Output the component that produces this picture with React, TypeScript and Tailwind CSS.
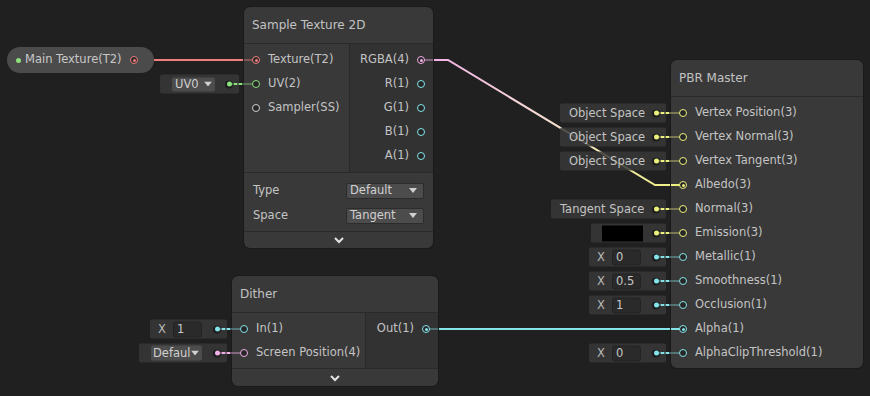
import React from "react";

type Tone = { ring: string; fill: string; dim: string };

const tone: Record<string, Tone> = {
  tex: { ring: "border-[#f07e7e]", fill: "bg-[#f07e7e]", dim: "bg-[#f07e7e]/40" },
  uv: { ring: "border-[#8de07e]", fill: "bg-[#8de07e]", dim: "bg-[#8de07e]/35" },
  ss: { ring: "border-[#d2d2d2]", fill: "bg-[#d2d2d2]", dim: "bg-[#d2d2d2]/35" },
  v4: { ring: "border-[#f2b0e6]", fill: "bg-[#f2b0e6]", dim: "bg-[#f2b0e6]/40" },
  v3: { ring: "border-[#eef07e]", fill: "bg-[#eef07e]", dim: "bg-[#eef07e]/35" },
  v1: { ring: "border-[#84e4ea]", fill: "bg-[#84e4ea]", dim: "bg-[#84e4ea]/35" },
};

function Port({ t, on }: { t: Tone; on?: boolean }) {
  return (
    <span
      className={`relative z-10 flex h-2 w-2 shrink-0 items-center justify-center rounded-full border-[1.5px] bg-[#262626] ${t.ring}`}
    >
      {on && <span className={`h-[3px] w-[3px] rounded-full ${t.fill}`} />}
    </span>
  );
}

function Dot({ t }: { t: Tone }) {
  return (
    <span className="flex h-[8px] w-[8px] shrink-0 items-center justify-center rounded-full bg-[#1c1c1c]">
      <span className={`h-[5px] w-[5px] rounded-full ${t.fill}`} />
    </span>
  );
}

function Caret() {
  return (
    <svg width="8" height="5" viewBox="0 0 8 5" className="shrink-0">
      <polygon points="0,0 8,0 4,5" fill="#d0d0d0" />
    </svg>
  );
}

function Dropdown({ label, w }: { label: string; w: string }) {
  return (
    <div
      className={`flex h-[16px] items-center justify-between rounded-[2px] border border-[#2c2c2c] bg-[#4c4c4c] pl-[3px] pr-[6px] text-[#d0d0d0] ${w}`}
    >
      <span className="leading-none">{label}</span>
      <Caret />
    </div>
  );
}

function Chevron() {
  return (
    <svg width="12" height="8" viewBox="0 0 12 8">
      <polyline points="2,2 6,6 10,2" fill="none" stroke="#e4e4e4" strokeWidth="2" />
    </svg>
  );
}

// inline value box sitting left of an input port
function Inline({ t, w, children }: { t: Tone; w: string; children: React.ReactNode }) {
  return (
    <>
      <div
        className={`absolute right-[calc(100%+5px)] top-1/2 flex h-[19px] -translate-y-1/2 items-center rounded-[2px] bg-[#383838]/85 pr-[6px] ${w}`}
      >
        <div className="flex min-w-0 flex-1 items-center">{children}</div>
        <Dot t={t} />
      </div>
      <span className={`absolute left-[-12px] top-1/2 h-[2px] w-[20px] -translate-y-1/2 ${t.dim}`} />
      <span className={`absolute left-[-10px] top-1/2 h-[2px] w-[3px] -translate-y-1/2 ${t.fill}`} />
      <span className={`absolute left-[-5px] top-1/2 h-[2px] w-[3px] -translate-y-1/2 ${t.fill}`} />
    </>
  );
}

function FloatField({ value }: { value: string }) {
  return (
    <>
      <span className="ml-[8px] w-[8px] text-[#b8b8b8]">X</span>
      <span className="ml-[7px] flex h-[16px] w-[29px] items-center rounded-[3px] border border-[#222] bg-[#2a2a2a] pl-[3px] text-[#c8c8c8]">
        {value}
      </span>
    </>
  );
}

function In({
  t,
  label,
  on,
  wire,
  inline,
}: {
  t: Tone;
  label: string;
  on?: boolean;
  wire?: string;
  inline?: React.ReactNode;
}) {
  return (
    <div className="relative flex h-6 items-center gap-2 pl-2">
      {inline}
      {wire && <span className={`absolute left-0 top-1/2 h-[2px] w-[9px] -translate-y-1/2 ${wire}`} />}
      <Port t={t} on={on} />
      <span className="whitespace-nowrap">{label}</span>
    </div>
  );
}

function Out({ t, label, on }: { t: Tone; label: string; on?: boolean }) {
  return (
    <div className="relative flex h-6 items-center justify-end gap-2 pr-2">
      <span className="whitespace-nowrap">{label}</span>
      {on && <span className={`absolute right-0 top-1/2 h-[2px] w-[9px] -translate-y-1/2 ${t.dim}`} />}
      <Port t={t} on={on} />
    </div>
  );
}

function Node({
  title,
  className,
  children,
}: {
  title: string;
  className: string;
  children: React.ReactNode;
}) {
  return (
    <div className={`absolute flex flex-col rounded-md bg-[#393939] shadow-[0_0_0_1px_#1a1a1a] ${className}`}>
      <div className="flex h-[37px] shrink-0 items-center border-b border-[#2a2a2a] pl-2 text-[12px] text-[#c2c2c2]">
        {title}
      </div>
      {children}
    </div>
  );
}

export default function App() {
  return (
    <div className="relative h-[396px] w-[870px] overflow-hidden bg-[#202020] font-['DejaVu_Sans',sans-serif] text-[11.5px] text-[#c4c4c4]">
      {/* wires */}
      <svg className="absolute inset-0" width="870" height="396">
        <defs>
          <linearGradient id="rgba" gradientUnits="userSpaceOnUse" x1="433" y1="0" x2="683" y2="0">
            <stop offset="0" stopColor="#f4b2e8" />
            <stop offset="0.5" stopColor="#f7e2cf" />
            <stop offset="1" stopColor="#eef07e" />
          </linearGradient>
        </defs>
        <path d="M154 60 H246" stroke="#f07e7e" strokeWidth="2" fill="none" />
        <path d="M432 60 H448 L655 185 H672" stroke="url(#rgba)" strokeWidth="2" fill="none" />
        <path d="M437 329 H672" stroke="#84e4ea" strokeWidth="2" fill="none" />
      </svg>

      {/* property node */}
      <div className="absolute left-[7px] top-[47px] flex h-[26px] w-[147px] items-center rounded-full bg-[#4b4b4b] pl-[9px] pr-[16px] text-[#c8c8c8]">
        <span className="h-[5px] w-[5px] rounded-full bg-[#8de07e]" />
        <span className="ml-[4px] text-[11.5px]">Main Texture(T2)</span>
        <span className="ml-auto">
          <Port t={tone.tex} on />
        </span>
      </div>

      {/* Sample Texture 2D */}
      <Node title="Sample Texture 2D" className="left-[244px] top-[7px] w-[189px]">
        <div className="flex h-[129px] border-b border-[#2a2a2a]">
          <div className="w-[106px] border-r border-[#2a2a2a] pt-1">
            <In t={tone.tex} label="Texture(T2)" on wire={tone.tex.dim} />
            <In
              t={tone.uv}
              label="UV(2)"
              inline={
                <Inline t={tone.uv} w="w-[79px]">
                  <span className="ml-[12px] flex h-[14px] w-[43px] items-center justify-between rounded-[2px] bg-[#4c4c4c] px-[3px] text-[#d0d0d0]">
                    <span>UV0</span>
                    <Caret />
                  </span>
                </Inline>
              }
            />
            <In t={tone.ss} label="Sampler(SS)" />
          </div>
          <div className="flex-1 bg-[#323232] pt-1">
            <Out t={tone.v4} label="RGBA(4)" on />
            <Out t={tone.v1} label="R(1)" />
            <Out t={tone.v1} label="G(1)" />
            <Out t={tone.v1} label="B(1)" />
            <Out t={tone.v1} label="A(1)" />
          </div>
        </div>
        <div className="border-b border-[#2a2a2a] pb-[3px] pt-[5px]">
          <div className="flex h-[25px] items-center justify-between px-[9px]">
            <span>Type</span>
            <Dropdown label="Default" w="w-[78px]" />
          </div>
          <div className="flex h-[25px] items-center justify-between px-[9px]">
            <span>Space</span>
            <Dropdown label="Tangent" w="w-[78px]" />
          </div>
        </div>
        <div className="flex h-4 items-center justify-center">
          <Chevron />
        </div>
      </Node>

      {/* Dither */}
      <Node title="Dither" className="left-[232px] top-[276px] w-[206px]">
        <div className="flex h-[56px] border-b border-[#2a2a2a]">
          <div className="w-[134px] border-r border-[#2a2a2a] pt-1">
            <In
              t={tone.v1}
              label="In(1)"
              inline={
                <Inline t={tone.v1} w="w-[77px]">
                  <FloatField value="1" />
                </Inline>
              }
            />
            <In
              t={tone.v4}
              label="Screen Position(4)"
              inline={
                <Inline t={tone.v4} w="w-[88px]">
                  <span className="ml-[12px] flex h-[15px] w-[51px] items-center justify-between rounded-[2px] bg-[#4c4c4c] pl-[2px] pr-[3px] text-[#d0d0d0]">
                    <span className="overflow-hidden">Defaul</span>
                    <Caret />
                  </span>
                </Inline>
              }
            />
          </div>
          <div className="flex-1 bg-[#323232] pt-1">
            <Out t={tone.v1} label="Out(1)" on />
          </div>
        </div>
        <div className="flex h-[17px] items-center justify-center">
          <Chevron />
        </div>
      </Node>

      {/* PBR Master */}
      <Node title="PBR Master" className="left-[671px] top-[60px] w-[192px]">
        <div className="pb-[3px] pt-1">
          {["Vertex Position(3)", "Vertex Normal(3)", "Vertex Tangent(3)"].map((l) => (
            <In
              key={l}
              t={tone.v3}
              label={l}
              inline={
                <Inline t={tone.v3} w="w-[106px]">
                  <span className="pl-[9px] text-[#c4c4c4]">Object Space</span>
                </Inline>
              }
            />
          ))}
          <In t={tone.v3} label="Albedo(3)" on wire={tone.v3.fill} />
          <In
            t={tone.v3}
            label="Normal(3)"
            inline={
              <Inline t={tone.v3} w="w-[115px]">
                <span className="pl-[9px] text-[#c4c4c4]">Tangent Space</span>
              </Inline>
            }
          />
          <In
            t={tone.v3}
            label="Emission(3)"
            inline={
              <Inline t={tone.v3} w="w-[75px]">
                <span className="ml-[11px] h-[16px] w-[41px] bg-black" />
              </Inline>
            }
          />
          {[
            ["Metallic(1)", "0"],
            ["Smoothness(1)", "0.5"],
            ["Occlusion(1)", "1"],
          ].map(([l, v]) => (
            <In
              key={l}
              t={tone.v1}
              label={l}
              inline={
                <Inline t={tone.v1} w="w-[77px]">
                  <FloatField value={v} />
                </Inline>
              }
            />
          ))}
          <In t={tone.v1} label="Alpha(1)" on wire={tone.v1.fill} />
          <In
            t={tone.v1}
            label="AlphaClipThreshold(1)"
            inline={
              <Inline t={tone.v1} w="w-[77px]">
                <FloatField value="0" />
              </Inline>
            }
          />
        </div>
      </Node>
    </div>
  );
}
